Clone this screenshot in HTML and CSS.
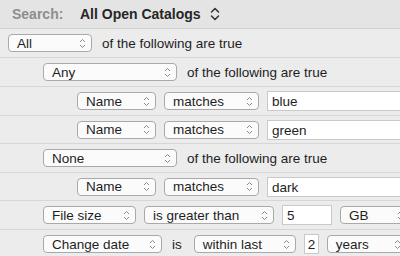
FILE: index.html
```html
<!DOCTYPE html>
<html>
<head>
<meta charset="utf-8">
<link rel="stylesheet" href="styles.css">
</head>
<body>
<div class="editor">
  <div class="header">
    <span class="search-label">Search:</span>
    <span class="scope">All Open Catalogs</span>
    <svg class="scope-arrows" width="10" height="16" viewBox="0 0 10 16"><path d="M1.5 6 L5 2.5 L8.5 6 M1.5 10 L5 13.5 L8.5 10" fill="none" stroke="#333" stroke-width="1.5" stroke-linecap="round" stroke-linejoin="round"/></svg>
  </div>

  <div class="row lvl0">
    <div class="popup w-all"><span>All</span><svg class="arr" width="7" height="11" viewBox="0 0 7 11"><path d="M1 4 L3.5 1.5 L6 4 M1 7 L3.5 9.5 L6 7" fill="none" stroke="#8a8a8a" stroke-width="1"/></svg></div>
    <span class="label">of the following are true</span>
  </div>

  <div class="row lvl1">
    <div class="popup w-any"><span>Any</span><svg class="arr" width="7" height="11" viewBox="0 0 7 11"><path d="M1 4 L3.5 1.5 L6 4 M1 7 L3.5 9.5 L6 7" fill="none" stroke="#8a8a8a" stroke-width="1"/></svg></div>
    <span class="label">of the following are true</span>
  </div>

  <div class="row lvl2">
    <div class="popup w-name"><span>Name</span><svg class="arr" width="7" height="11" viewBox="0 0 7 11"><path d="M1 4 L3.5 1.5 L6 4 M1 7 L3.5 9.5 L6 7" fill="none" stroke="#8a8a8a" stroke-width="1"/></svg></div>
    <div class="popup w-match"><span>matches</span><svg class="arr" width="7" height="11" viewBox="0 0 7 11"><path d="M1 4 L3.5 1.5 L6 4 M1 7 L3.5 9.5 L6 7" fill="none" stroke="#8a8a8a" stroke-width="1"/></svg></div>
    <div class="field w-text">blue</div>
  </div>

  <div class="row lvl2 short">
    <div class="popup w-name"><span>Name</span><svg class="arr" width="7" height="11" viewBox="0 0 7 11"><path d="M1 4 L3.5 1.5 L6 4 M1 7 L3.5 9.5 L6 7" fill="none" stroke="#8a8a8a" stroke-width="1"/></svg></div>
    <div class="popup w-match"><span>matches</span><svg class="arr" width="7" height="11" viewBox="0 0 7 11"><path d="M1 4 L3.5 1.5 L6 4 M1 7 L3.5 9.5 L6 7" fill="none" stroke="#8a8a8a" stroke-width="1"/></svg></div>
    <div class="field w-text">green</div>
  </div>

  <div class="row lvl1">
    <div class="popup w-any"><span>None</span><svg class="arr" width="7" height="11" viewBox="0 0 7 11"><path d="M1 4 L3.5 1.5 L6 4 M1 7 L3.5 9.5 L6 7" fill="none" stroke="#8a8a8a" stroke-width="1"/></svg></div>
    <span class="label">of the following are true</span>
  </div>

  <div class="row lvl2 short">
    <div class="popup w-name"><span>Name</span><svg class="arr" width="7" height="11" viewBox="0 0 7 11"><path d="M1 4 L3.5 1.5 L6 4 M1 7 L3.5 9.5 L6 7" fill="none" stroke="#8a8a8a" stroke-width="1"/></svg></div>
    <div class="popup w-match"><span>matches</span><svg class="arr" width="7" height="11" viewBox="0 0 7 11"><path d="M1 4 L3.5 1.5 L6 4 M1 7 L3.5 9.5 L6 7" fill="none" stroke="#8a8a8a" stroke-width="1"/></svg></div>
    <div class="field w-text">dark</div>
  </div>

  <div class="row lvl1">
    <div class="popup w-size"><span>File size</span><svg class="arr" width="7" height="11" viewBox="0 0 7 11"><path d="M1 4 L3.5 1.5 L6 4 M1 7 L3.5 9.5 L6 7" fill="none" stroke="#8a8a8a" stroke-width="1"/></svg></div>
    <div class="popup w-greater"><span>is greater than</span><svg class="arr" width="7" height="11" viewBox="0 0 7 11"><path d="M1 4 L3.5 1.5 L6 4 M1 7 L3.5 9.5 L6 7" fill="none" stroke="#8a8a8a" stroke-width="1"/></svg></div>
    <div class="field w-num">5</div>
    <div class="popup w-unit"><span>GB</span><svg class="arr" width="7" height="11" viewBox="0 0 7 11"><path d="M1 4 L3.5 1.5 L6 4 M1 7 L3.5 9.5 L6 7" fill="none" stroke="#8a8a8a" stroke-width="1"/></svg></div>
  </div>

  <div class="row lvl1">
    <div class="popup w-date"><span>Change date</span><svg class="arr" width="7" height="11" viewBox="0 0 7 11"><path d="M1 4 L3.5 1.5 L6 4 M1 7 L3.5 9.5 L6 7" fill="none" stroke="#8a8a8a" stroke-width="1"/></svg></div>
    <span class="label is">is</span>
    <div class="popup w-within"><span>within last</span><svg class="arr" width="7" height="11" viewBox="0 0 7 11"><path d="M1 4 L3.5 1.5 L6 4 M1 7 L3.5 9.5 L6 7" fill="none" stroke="#8a8a8a" stroke-width="1"/></svg></div>
    <div class="field w-small">2</div>
    <div class="popup w-years"><span>years</span><svg class="arr" width="7" height="11" viewBox="0 0 7 11"><path d="M1 4 L3.5 1.5 L6 4 M1 7 L3.5 9.5 L6 7" fill="none" stroke="#8a8a8a" stroke-width="1"/></svg></div>
  </div>
</div>
</body>
</html>
```

FILE: styles.css
```css
html, body {
  margin: 0;
  padding: 0;
  width: 400px;
  height: 256px;
  overflow: hidden;
  background: #ececec;
  font-family: "Liberation Sans", Arial, sans-serif;
  font-size: 13.5px;
  color: #1e1e1e;
}

.editor {
  width: 400px;
  overflow: hidden;
}

.header {
  background: #e4e4e4;
  border-bottom: 1px solid #cfcfcf;
  display: flex;
  align-items: center;
  padding-left: 12px;
  box-sizing: border-box;
  height: 29px;
  white-space: nowrap;
}

.search-label {
  font-weight: bold;
  color: #8e8e8e;
  font-size: 14px;
  width: 68px;
}

.scope {
  font-weight: bold;
  color: #262626;
  font-size: 14px;
}

.scope-arrows {
  margin-left: 9px;
}

.row {
  height: 29px;
  box-sizing: border-box;
  border-bottom: 1px solid #d6d6d6;
  display: flex;
  align-items: center;
  gap: 8px;
  white-space: nowrap;
  flex-wrap: nowrap;
}

.row.short {
  height: 28px;
}

.lvl0 { padding-left: 8px; }
.lvl1 { padding-left: 43px; }
.lvl2 { padding-left: 77px; }

.popup {
  flex: none;
  height: 18px;
  box-sizing: border-box;
  border: 1px solid #a9a9a9;
  border-radius: 4px;
  background: #fbfbfb;
  display: flex;
  align-items: center;
  justify-content: space-between;
  padding: 0 5px 0 8px;
  color: #1e1e1e;
}

.popup span {
  line-height: 16px;
  padding-top: 1px;
}

.arr {
  flex: none;
}

.field {
  flex: none;
  height: 20px;
  box-sizing: border-box;
  border: 1px solid #c9c9c9;
  background: #ffffff;
  padding: 0 4px;
  line-height: 19px;
  color: #1e1e1e;
}

.label {
  margin-left: 2px;
  color: #1e1e1e;
}

.label.is {
  margin: 0 4px 0 2px;
}

.w-all { width: 84px; }
.w-any { width: 134px; }
.w-name { width: 79px; }
.w-match { width: 95px; }
.w-text { width: 140px; }
.w-size { width: 93px; }
.w-greater { width: 130px; }
.w-num { width: 50px; }
.w-unit { width: 70px; }
.w-date { width: 119px; }
.w-within { width: 102px; }
.w-small { width: 15px; padding: 0 3px; }
.w-years { width: 80px; }
```
